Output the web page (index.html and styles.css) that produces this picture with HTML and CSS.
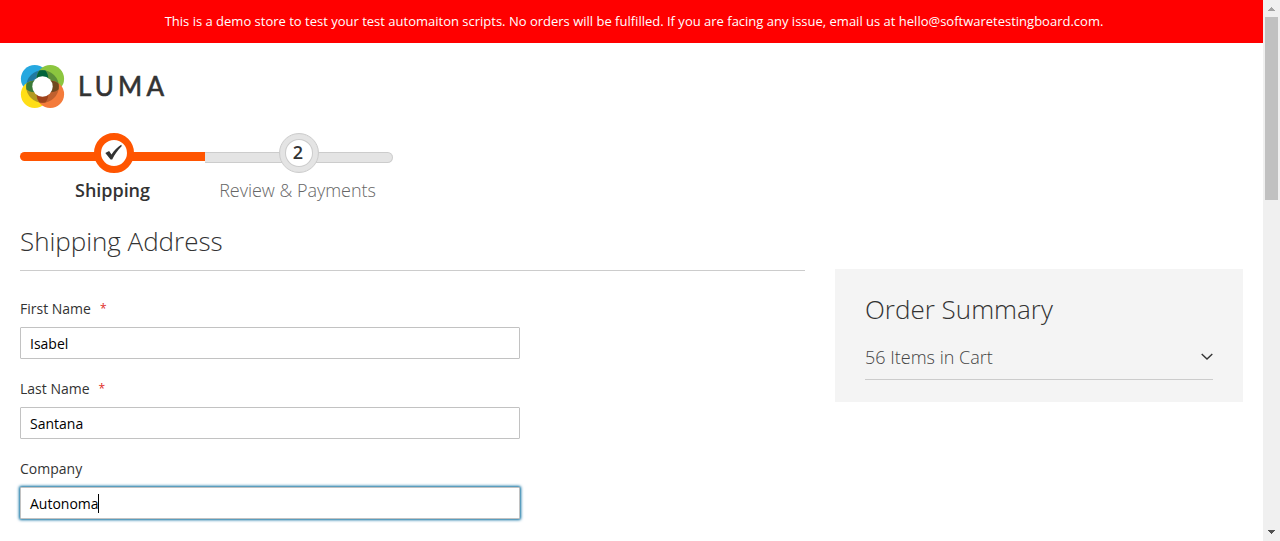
FILE: index.html
```html
<!DOCTYPE html>
<html lang="en">
<head>
<meta charset="utf-8">
<title>Checkout</title>
<link rel="stylesheet" href="styles.css">
</head>
<body>
<div class="window">
  <div class="page">
    <div class="notice"><span>This is a demo store to test your test automaiton scripts. No orders will be fulfilled. If you are facing any issue, email us at hello@softwaretestingboard.com.</span></div>
    <header class="header">
      <svg class="logo" width="148" height="44" viewBox="20 65 148 44" role="img" aria-label="Luma">
        <defs>
          <clipPath id="ring"><circle cx="42.5" cy="86.5" r="16.3"/></clipPath>
        </defs>
        <circle cx="34.7" cy="78.8" r="13.8" fill="#26a8e0"/>
        <circle cx="50.3" cy="78.8" r="13.8" fill="#8cc63f"/>
        <circle cx="34.7" cy="94.3" r="13.8" fill="#ffde17"/>
        <circle cx="50.3" cy="94.3" r="13.8" fill="#f47b3b"/>
        <g clip-path="url(#ring)">
          <circle cx="34.7" cy="78.8" r="13.8" fill="#2079a0"/>
          <circle cx="50.3" cy="78.8" r="13.8" fill="#5c8f38"/>
          <circle cx="34.7" cy="94.3" r="13.8" fill="#b39920"/>
          <circle cx="50.3" cy="94.3" r="13.8" fill="#c0602e"/>
          <path d="M42.5 67.5C37 72 35.8 77 37.5 83H47.5C49.2 77 48 72 42.5 67.5Z" fill="#00633a"/>
          <path d="M23.5 86.5C28 81 33 79.8 39 81.5V91.5C33 93.2 28 92 23.5 86.5Z" fill="#3b7a38"/>
          <path d="M61.5 86.5C57 81 52 79.8 46 81.5V91.5C52 93.2 57 92 61.5 86.5Z" fill="#70491f"/>
          <path d="M42.5 105.5C37 101 35.8 96 37.5 90H47.5C49.2 96 48 101 42.5 105.5Z" fill="#9f431b"/>
        </g>
        <circle cx="42.5" cy="86.5" r="10.2" fill="#fff"/>
        <text class="wordmark" x="78" y="95.6" textLength="86" lengthAdjust="spacing">LUMA</text>
      </svg>
    </header>
    <ul class="progress">
      <li class="step active">
        <span class="badge"><svg width="20" height="18" viewBox="0 0 20 18"><path d="M1.3 8.9L5.1 6.9L7.5 10.4C10.3 6.3 13.3 3.1 17.2 .7L17.8 1.9C13.5 6 10.8 10.4 8.2 15.4H6.6Z" fill="#333"/></svg></span>
        <span class="label">Shipping</span>
      </li>
      <li class="step">
        <span class="badge"><span class="number">2</span></span>
        <span class="label">Review &amp; Payments</span>
      </li>
    </ul>
    <main class="checkout">
      <form class="address">
        <h1 class="title"><span>Shipping Address</span></h1>
        <div class="field"><label for="first"><span>First Name</span><b class="required">*</b></label><input id="first" type="text" value="Isabel"></div>
        <div class="field"><label for="last"><span>Last Name</span><b class="required">*</b></label><input id="last" type="text" value="Santana"></div>
        <div class="field"><label><span>Company</span></label><div class="control focused"><span>Autonoma</span><i class="caret"></i></div></div>
      </form>
      <aside class="summary">
        <h2>Order Summary</h2>
        <div class="cart"><span>56 Items in Cart</span><svg width="12" height="8" viewBox="0 0 12 8"><path d="M.7 1L6 6L11.3 1" fill="none" stroke="#333" stroke-width="1.4"/></svg></div>
      </aside>
    </main>
  </div>
  <div class="scrollbar">
    <svg width="17" height="17" viewBox="0 0 17 17" shape-rendering="crispEdges"><path d="M5 11V10H6V9H7V8H8V7H9V8H10V9H11V10H12V11Z" fill="#a3a3a3"/></svg>
    <div class="thumb"></div>
    <svg class="down" width="17" height="17" viewBox="0 0 17 17" shape-rendering="crispEdges"><path d="M5 6H12V7H11V8H10V9H9V10H8V9H7V8H6V7H5Z" fill="#505050"/></svg>
  </div>
</div>
</body>
</html>
```
FILE: styles.css
```css
* { box-sizing: border-box; }
body { margin: 0; background: #fff; color: #333; font-family: "Open Sans", "Noto Sans", sans-serif; font-size: 14px; line-height: 20px; }
.window { display: flex; height: 541px; overflow: hidden; }
.page { flex: 1; min-width: 0; }
.notice { height: 43px; padding-top: 11px; padding-left: 5px; background: #f00; color: #fff; font-size: 13px; text-align: center; white-space: nowrap; }
.header { padding: 22px 20px 0; height: 90px; }
.logo { display: block; }
.wordmark { font-family: Lato, sans-serif; font-size: 26px; font-weight: 400; fill: #333; stroke: #333; stroke-width: .6px; }

.progress { display: flex; width: 372px; margin: 0 0 0 20px; padding: 0; list-style: none; }
.step { position: relative; display: flex; flex-direction: column; align-items: center; width: 187px; height: 72px; color: #666; font-size: 18px; font-weight: 300; }
.step.active { width: 185px; }
.step::before { content: ""; position: absolute; left: 0; top: 19px; width: 100%; height: 9px; background: #e4e4e4; border: 1px solid #ccc; border-left: 0; border-radius: 0 6px 6px 0; }
.step.active::before { background: #ff5501; border: 0; border-radius: 6px 0 0 6px; }
.badge { position: relative; display: flex; align-items: center; justify-content: center; width: 40px; height: 40px; margin-left: 1px; border-radius: 50%; background: #fff; border: 1px solid #ccc; box-shadow: inset 0 0 0 5px #e4e4e4, inset 0 0 0 6px #ccc; color: #333; font-weight: 600; line-height: 38px; }
.step:not(.active) .badge { margin-left: 0; }
.number { padding: 0 1px 2px 0; line-height: 36px; }
.active .badge { margin-left: 3px; border: 7px solid #ff5501; box-shadow: none; }
.label { margin-top: 5px; line-height: 25px; white-space: nowrap; letter-spacing: -.03px; }
.step:not(.active) .label { margin-left: -2px; }
.active .label { color: #333; font-weight: 600; }

.checkout { display: flex; align-items: flex-start; gap: 30px; padding: 0 20px; }
.address { width: 785px; }
.title { margin: 0 0 28px; height: 66px; padding-top: 18px; border-bottom: 1px solid #ccc; font-size: 26px; font-weight: 300; line-height: 36px; letter-spacing: -.03px; }
.field { height: 80px; }
.field label { display: flex; height: 28px; align-items: flex-start; }
.required { margin-left: 9px; color: #e02b27; font-size: 12px; font-weight: 400; }
.field input, .control { display: flex; align-items: center; width: 500px; height: 32px; margin: 0; padding: 0 9px; border: 1px solid #c2c2c2; border-radius: 1px; background: #fff; color: #000; font: 14px "Open Sans", sans-serif; }
.control.focused { box-shadow: 0 0 3px 1px #00699d; }
.caret { width: 1px; height: 19px; margin-left: -1px; background: #000; }

.summary { flex: 1; height: 133px; margin-top: 64px; padding: 22px 30px; background: #f4f4f4; }
.summary h2 { margin: 0; font-size: 26px; font-weight: 300; line-height: 37px; }
.cart { display: flex; align-items: center; justify-content: space-between; height: 52px; padding-top: 7px; border-bottom: 1px solid #ccc; color: #444; font-size: 18px; font-weight: 300; }

.scrollbar { display: flex; flex-direction: column; width: 17px; background: #f0f0f0; }
.thumb { width: 13px; height: 183px; margin-left: 2px; background: #c1c1c1; }
.down { margin-top: auto; }
```
